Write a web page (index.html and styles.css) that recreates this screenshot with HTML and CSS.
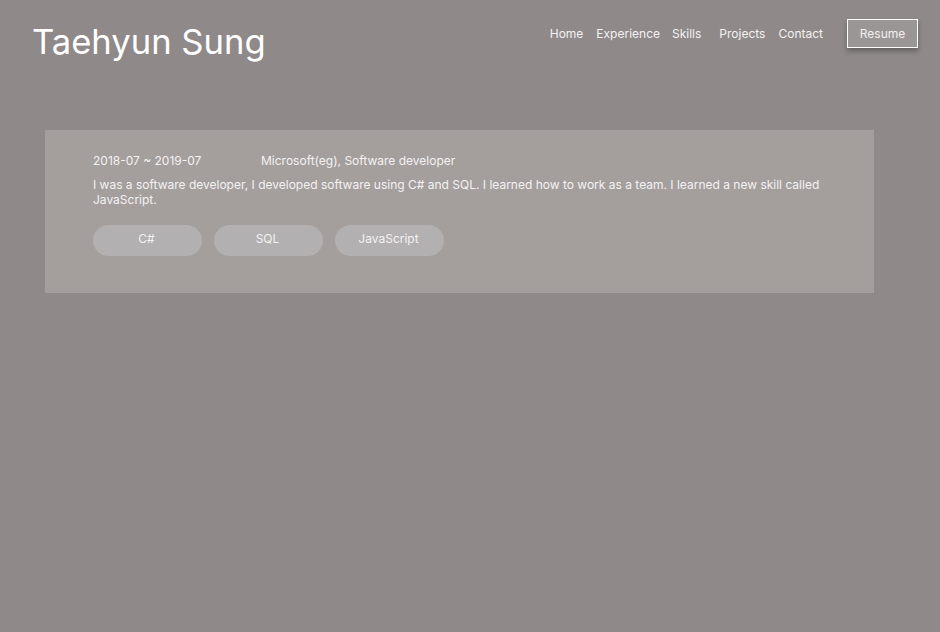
FILE: index.html
```html
<!DOCTYPE html>
<html lang="en">
<head>
<meta charset="utf-8">
<title>Taehyun Sung</title>
<link rel="stylesheet" href="styles.css">
</head>
<body>
<header class="header">
  <h1 class="logo">Taehyun Sung</h1>
  <nav class="nav">
    <a class="nav-link" href="#">Home</a>
    <a class="nav-link nav-exp" href="#">Experience</a>
    <a class="nav-link nav-skills" href="#">Skills</a>
    <a class="nav-link" href="#">Projects</a>
    <a class="nav-link" href="#">Contact</a>
    <a class="resume" href="#">Resume</a>
  </nav>
</header>
<main class="main">
  <section class="card">
    <div class="card-head">
      <span class="period">2018-07 ~ 2019-07</span>
      <span class="role">Microsoft(eg), Software developer</span>
    </div>
    <p class="desc">I was a software developer, I developed software using C# and SQL. I learned how to work as a team. I learned a new skill called JavaScript.</p>
    <ul class="tags">
      <li class="tag">C#</li>
      <li class="tag">SQL</li>
      <li class="tag">JavaScript</li>
    </ul>
  </section>
</main>
</body>
</html>
```
FILE: styles.css
```css
* { box-sizing: border-box; }
html, body { margin: 0; padding: 0; }
body {
  background: #8f8989;
  font-family: Inter, "Noto Sans", sans-serif;
  color: #f4f2f2;
  width: 940px;
  height: 632px;
  overflow: hidden;
}
.header {
  display: flex;
  justify-content: space-between;
  align-items: flex-start;
  padding: 19px 22px 0 32px;
  height: 130px;
}
.logo {
  margin: 0;
  font-size: 34.6px;
  font-weight: 400;
  line-height: 44px;
  color: #fff;
}
.nav {
  display: flex;
  align-items: center;
  height: 29px;
}
.nav-link {
  color: #f4f2f2;
  text-decoration: none;
  font-size: 12px;
  margin-right: 13px;
}
.nav-exp { margin-right: 12px; }
.nav-skills { margin-right: 18px; }
.resume {
  margin-left: 11px;
  color: #f2f0f0;
  text-decoration: none;
  font-size: 12px;
  width: 71px;
  height: 29px;
  display: flex;
  align-items: center;
  justify-content: center;
  border: 1px solid #fff;
  background: #9a9696;
  box-shadow: 0 3px 5px rgba(0,0,0,0.3);
}
.main {
  padding: 0 66px 0 45px;
}
.card {
  background: #a49e9d;
  height: 163px;
  padding: 23px 48px 0 48px;
}
.card-head {
  display: flex;
  font-size: 12px;
  line-height: 15px;
}
.period { width: 168px; }
.desc {
  margin: 9px 0 0 0;
  font-size: 12px;
  line-height: 15px;
}
.tags {
  list-style: none;
  margin: 18px 0 0 0;
  padding: 0;
  display: flex;
  gap: 12px;
}
.tag {
  width: 109px;
  height: 31px;
  border-radius: 16px;
  background: #b2b0b0;
  font-size: 12px;
  display: flex;
  justify-content: center;
  padding: 6px 2px 0 0;
}
```
